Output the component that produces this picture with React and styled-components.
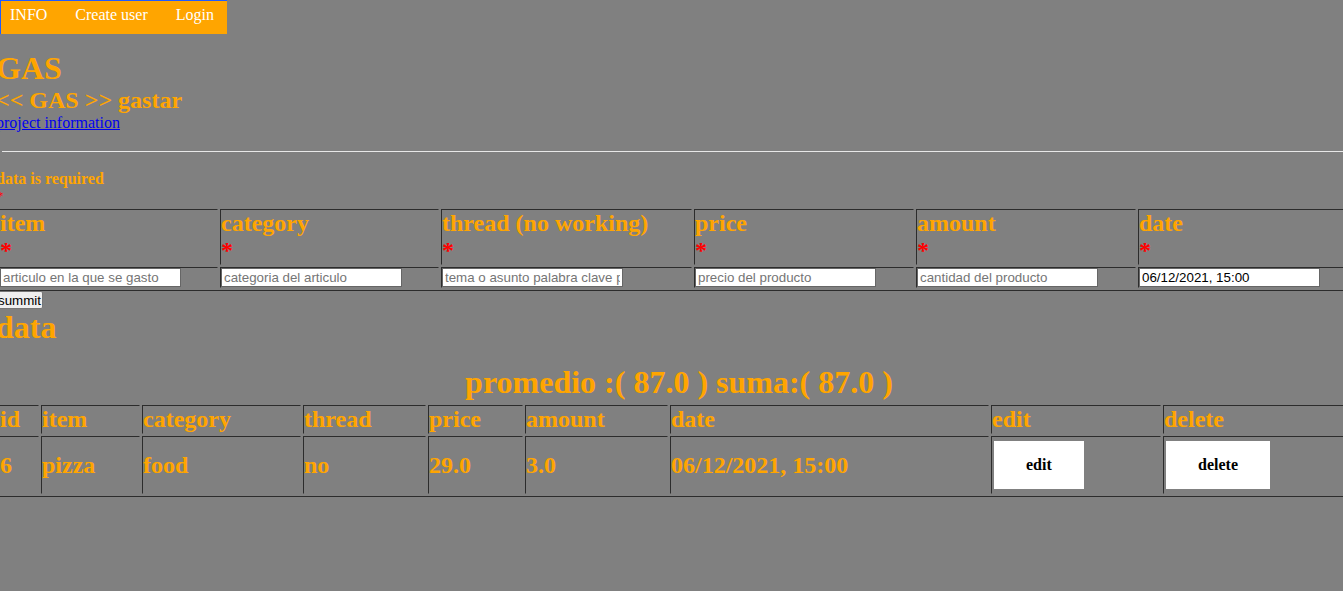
import React from 'react';
import styled, { createGlobalStyle } from 'styled-components';

const GlobalStyle = createGlobalStyle`
  html, body {
    margin: 0;
    padding: 0;
    background: #808080;
    overflow: hidden;
  }
  body {
    font-family: "Liberation Serif", "Times New Roman", serif;
    font-size: 16px;
  }
`;

const ORANGE = '#ffa500';
const DARK = '#2c2c2c';
const GRAY = '#808080';

const Page = styled.div`
  width: 1343px;
  min-height: 591px;
  overflow: hidden;
`;

const NavBar = styled.nav`
  display: flex;
  width: fit-content;
  align-items: flex-start;
  gap: 28px;
  height: 28px;
  padding: 5px 13px 0 9px;
  background: ${ORANGE};
  border-top: 1px solid #1f5bff;
  border-left: 1px solid #1f5bff;
`;

const NavLink = styled.a`
  color: #ffffff;
  text-decoration: none;
  font-size: 16px;
  line-height: normal;
  white-space: nowrap;
`;

const Main = styled.main`
  width: 1366px;
  margin-left: -4px;
`;

const Title = styled.h1`
  margin: ${(p) => p.$top || 0}px 0 0 0;
  font-size: 32px;
  font-weight: bold;
  color: ${ORANGE};
  line-height: normal;
  white-space: nowrap;
`;

const Subtitle = styled.h2`
  margin: 0;
  font-size: 24px;
  font-weight: bold;
  color: ${ORANGE};
  line-height: normal;
`;

const InfoLink = styled.a`
  display: block;
  width: fit-content;
  margin-left: 0;
  color: #0000ee;
  text-decoration: underline;
  font-size: 16px;
  line-height: normal;
`;

const Divider = styled.div`
  margin: 19px 0 0 6px;
  border-top: 1px solid #e8e8e8;
`;

const Notice = styled.div`
  margin: 18px 0 0 0;
  font-size: 16px;
  font-weight: bold;
  color: ${ORANGE};
  line-height: normal;
`;

const TinyMark = styled.div`
  margin: 0 0 3px 1px;
  font-size: 13px;
  color: #ff0000;
  line-height: 15px;
`;

const Table = styled.table`
  width: 1366px;
  table-layout: fixed;
  border-spacing: 2px;
  border: 1px solid;
  border-color: ${GRAY} ${DARK} ${DARK} ${GRAY};
  margin-top: ${(p) => p.$top || 0}px;
`;

const Cell = styled.td`
  box-sizing: border-box;
  width: ${(p) => (p.$w ? `${p.$w}px` : 'auto')};
  padding: 0;
  border: 1px solid;
  border-color: ${DARK} ${GRAY} ${GRAY} ${DARK};
  text-align: left;
  vertical-align: middle;
  font-size: 24px;
  font-weight: bold;
  color: ${ORANGE};
  line-height: normal;
  white-space: nowrap;
  overflow: hidden;
`;

const Required = styled.span`
  color: #ff0000;
`;

const Field = styled.input`
  display: block;
  box-sizing: border-box;
  width: 181px;
  height: 19px;
  margin: 0;
  padding: 1px 2px;
  border: 1px solid #666666;
  background: #ffffff;
  font-family: "Liberation Sans", Arial, sans-serif;
  font-size: 13.333px;
  color: #000000;
  &::placeholder {
    color: #757575;
  }
`;

const SubmitButton = styled.button`
  display: block;
  box-sizing: border-box;
  height: 18px;
  margin: 0 0 0 1px;
  padding: 0 1px 0 0;
  border: 1px solid #767676;
  border-radius: 2px;
  background: #efefef;
  color: #000000;
  font-family: "Liberation Sans", Arial, sans-serif;
  font-size: 13.333px;
  line-height: 15px;
`;

const Summary = styled.h1`
  margin: 18px 0 0;
  text-align: center;
  font-size: 32px;
  font-weight: bold;
  color: ${ORANGE};
  line-height: normal;
`;

const ActionButton = styled.button`
  display: inline-block;
  margin: 4px 2px;
  padding: 15px 32px;
  border: none;
  background: #ffffff;
  color: #000000;
  font-family: "Liberation Serif", "Times New Roman", serif;
  font-size: 16px;
  font-weight: bold;
  line-height: normal;
  text-align: center;
`;

const formColumns = [
  { label: 'item', w: 219, ph: 'articulo en la que se gasto' },
  { label: 'category', w: 219, ph: 'categoria del articulo' },
  { label: 'thread (no working)', w: 251, ph: 'tema o asunto palabra clave para agrupar' },
  { label: 'price', w: 220, ph: 'precio del producto' },
  { label: 'amount', w: 220, ph: 'cantidad del producto' },
  { label: 'date', w: 221, value: '06/12/2021, 15:00' },
];

const dataColumns = [
  { label: 'id', w: 40 },
  { label: 'item', w: 99 },
  { label: 'category', w: 159 },
  { label: 'thread', w: 123 },
  { label: 'price', w: 95 },
  { label: 'amount', w: 143 },
  { label: 'date', w: 319 },
  { label: 'edit', w: 170 },
  { label: 'delete', w: 196 },
];

const rows = [
  { id: 6, item: 'pizza', category: 'food', thread: 'no', price: '29.0', amount: '3.0', date: '06/12/2021, 15:00' },
];

export default function App() {
  return (
    <Page>
      <GlobalStyle />
      <NavBar>
        <NavLink href="#">INFO</NavLink>
        <NavLink href="#">Create user</NavLink>
        <NavLink href="#">Login</NavLink>
      </NavBar>
      <Main>
        <Title $top={16}>GAS</Title>
        <Subtitle>&lt;&lt; GAS &gt;&gt; gastar</Subtitle>
        <InfoLink href="#">project information</InfoLink>
        <Divider />
        <Notice>data is required</Notice>
        <TinyMark>*</TinyMark>
        <form onSubmit={(e) => e.preventDefault()}>
          <Table>
            <tbody>
              <tr>
                {formColumns.map((c) => (
                  <Cell as="th" key={c.label} $w={c.w}>
                    {c.label}
                    <br />
                    <Required>*</Required>
                  </Cell>
                ))}
              </tr>
              <tr>
                {formColumns.map((c) => (
                  <Cell key={c.label}>
                    {c.value ? (
                      <Field type="text" defaultValue={c.value} />
                    ) : (
                      <Field type="text" placeholder={c.ph} />
                    )}
                  </Cell>
                ))}
              </tr>
            </tbody>
          </Table>
          <SubmitButton type="submit">summit</SubmitButton>
        </form>
        <Title $top={0}>data</Title>
        <Summary>promedio :( 87.0 ) suma:( 87.0 )</Summary>
        <Table $top={1}>
          <tbody>
            <tr>
              {dataColumns.map((c) => (
                <Cell as="th" key={c.label} $w={c.w}>
                  {c.label}
                </Cell>
              ))}
            </tr>
            {rows.map((r) => (
              <tr key={r.id}>
                <Cell>{r.id}</Cell>
                <Cell>{r.item}</Cell>
                <Cell>{r.category}</Cell>
                <Cell>{r.thread}</Cell>
                <Cell>{r.price}</Cell>
                <Cell>{r.amount}</Cell>
                <Cell>{r.date}</Cell>
                <Cell>
                  <ActionButton type="button">edit</ActionButton>
                </Cell>
                <Cell>
                  <ActionButton type="button">delete</ActionButton>
                </Cell>
              </tr>
            ))}
          </tbody>
        </Table>
      </Main>
    </Page>
  );
}
